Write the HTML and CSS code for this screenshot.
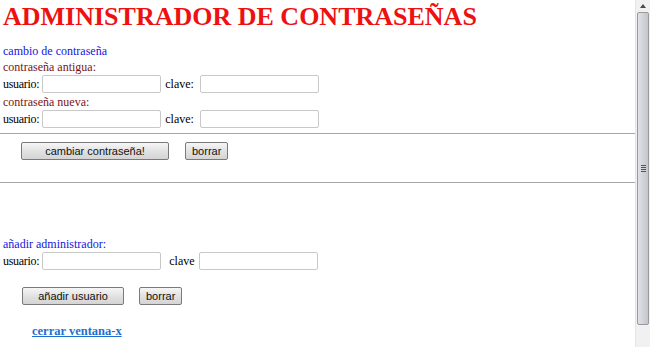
FILE: index.html
```html
<!DOCTYPE html>
<html lang="es">
<head>
    <meta charset="UTF-8">
    <title>Administrador de contraseñas</title>
    <link rel="stylesheet" href="styles.css">
</head>
<body>
    <div class="window">
        <div class="page">
            <h1 class="title">ADMINISTRADOR DE CONTRASEÑAS</h1>

            <form class="block first">
                <div class="heading">cambio de contraseña</div>
                <div class="sub">contraseña antigua:</div>
                <div class="row">
                    <span class="label">usuario:</span>
                    <input type="text" class="field">
                    <span class="label-pass">clave:</span>
                    <input type="password" class="field">
                </div>
                <div class="sub">contraseña nueva:</div>
                <div class="row">
                    <span class="label">usuario:</span>
                    <input type="text" class="field">
                    <span class="label-pass">clave:</span>
                    <input type="password" class="field">
                </div>
            </form>
            <hr class="rule rule-top">
            <div class="actions">
                <button class="btn btn-wide">cambiar contraseña!</button>
                <button class="btn">borrar</button>
            </div>
            <hr class="rule rule-bottom">

            <form class="block second">
                <div class="heading">añadir administrador:</div>
                <div class="row">
                    <span class="label">usuario:</span>
                    <input type="text" class="field">
                    <span class="label-pass short">clave</span>
                    <input type="password" class="field">
                </div>
            </form>
            <div class="actions actions-add">
                <button class="btn btn-add">añadir usuario</button>
                <button class="btn">borrar</button>
            </div>
            <div class="close">
                <a href="#" class="close-link">cerrar ventana-x</a>
            </div>
        </div>

        <div class="scrollbar">
            <div class="arrow-up"></div>
            <div class="thumb">
                <div class="grip"></div>
            </div>
            <div class="track"></div>
        </div>
    </div>
</body>
</html>
```

FILE: styles.css
```css
html, body {
    margin: 0;
    padding: 0;
    height: 100%;
    overflow: hidden;
    background-color: #ffffff;
}

body {
    font-family: "Liberation Serif", "Times New Roman", serif;
    font-size: 12px;
    color: #000000;
}

.window {
    display: flex;
    height: 347px;
}

.page {
    flex: 1;
    min-width: 0;
}

.title {
    margin: 0;
    padding: 2px 0 0 3px;
    font-size: 26px;
    line-height: 30px;
    color: #ee1111;
    font-weight: bold;
}

.block {
    margin: 0;
    padding: 0 3px;
}

.first {
    padding-top: 11px;
}

.heading {
    color: #1515e0;
    line-height: 16px;
}

.sub {
    color: #7a1414;
    line-height: 16px;
}

.row {
    display: flex;
    align-items: center;
    height: 18px;
    margin-bottom: 1px;
}

.label {
    margin-right: 3px;
    letter-spacing: -0.3px;
}

.label-pass {
    margin: 0 6px 0 4px;
}

.label-pass.short {
    margin: 0 4px 0 8px;
}

.field {
    box-sizing: border-box;
    width: 119px;
    height: 18px;
    margin: 0;
    padding: 1px 3px;
    border: 1px solid #c8c8c8;
    border-radius: 2px;
    background: #ffffff;
    font-size: 12px;
}

.rule {
    margin: 0;
    border: 0;
    height: 1px;
    background-color: #a6a6a6;
}

.rule-top {
    margin-top: 5px;
}

.actions {
    display: flex;
    gap: 16px;
    padding-left: 21px;
    margin-top: 8px;
}

.rule-bottom {
    margin-top: 22px;
}

.second {
    padding-top: 53px;
}

.actions-add {
    margin-top: 17px;
    padding-left: 22px;
    gap: 15px;
}

.btn {
    box-sizing: border-box;
    height: 18px;
    padding: 0 6px;
    font-family: "Liberation Sans", Arial, sans-serif;
    font-size: 11px;
    color: #111111;
    border: 1px solid #7a7a7a;
    border-radius: 2px;
    background: linear-gradient(#f6f6f6, #e2e2e2 50%, #d4d4d4);
}

.btn-wide {
    width: 148px;
}

.btn-add {
    width: 102px;
}

.close {
    margin-top: 18px;
    padding-left: 32px;
    line-height: 16px;
}

.close-link {
    color: #1f6fcf;
    font-weight: bold;
    font-size: 12.5px;
}

.scrollbar {
    width: 14px;
    display: flex;
    flex-direction: column;
    background-color: #f1f1f1;
    border-left: 1px solid #e4e4e4;
}

.arrow-up {
    height: 12px;
    position: relative;
}

.arrow-up::after {
    content: "";
    position: absolute;
    left: 4px;
    top: 4px;
    border-left: 3px solid transparent;
    border-right: 3px solid transparent;
    border-bottom: 4px solid #4a4a4a;
}

.thumb {
    height: 311px;
    margin: 0 1px;
    border: 1px solid #9a9a9a;
    border-radius: 2px;
    background: linear-gradient(to right, #e0e0e6, #d0d0d8 60%, #c4c4cc);
    display: flex;
    align-items: center;
    justify-content: center;
}

.grip {
    width: 5px;
    height: 7px;
    background: repeating-linear-gradient(#555 0 1px, transparent 1px 2px);
}

.track {
    flex: 1;
}
```
